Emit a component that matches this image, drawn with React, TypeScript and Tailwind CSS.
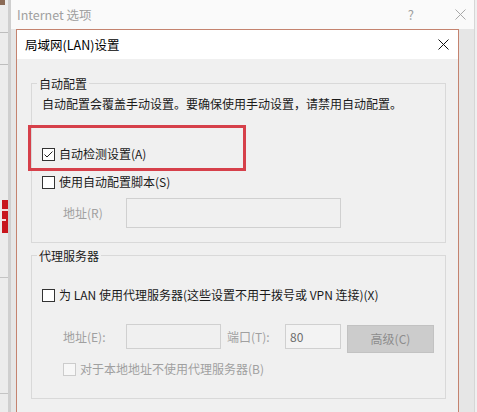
import React from "react";

const font = "font-['Noto_Sans_CJK_SC','Noto_Sans',sans-serif]";

function Box({ checked, disabled }: { checked?: boolean; disabled?: boolean }) {
  return (
    <span
      className={`flex h-[13px] w-[13px] shrink-0 items-center justify-center border ${
        disabled ? "border-[#cccccc] bg-[#f7f7f7]" : "border-[#333333] bg-white"
      }`}
    >
      {checked && (
        <svg width="11" height="11" viewBox="0 0 11 11">
          <path d="M1.5 5.5 L4 8 L9.5 2.5" fill="none" stroke="#222" strokeWidth="1" />
        </svg>
      )}
    </span>
  );
}

function CheckRow({
  label,
  checked,
  disabled,
  className = "",
}: {
  label: string;
  checked?: boolean;
  disabled?: boolean;
  className?: string;
}) {
  return (
    <div className={`flex h-[16px] items-center gap-[4px] ${className}`}>
      <Box checked={checked} disabled={disabled} />
      <span className={`text-[12px] leading-[16px] ${disabled ? "text-[#a0a0a0]" : "text-[#1a1a1a]"}`}>
        {label}
      </span>
    </div>
  );
}

function Group({ title, className = "", children }: { title: string; className?: string; children: React.ReactNode }) {
  return (
    <div className={`relative border border-[#d9d9d9] ${className}`}>
      <span className="absolute left-[5px] top-[-8px] bg-[#f0f0f0] px-[2px] text-[12px] leading-[16px] text-[#1a1a1a]">
        {title}
      </span>
      {children}
    </div>
  );
}

export default function App() {
  return (
    <div className={`relative h-[412px] w-[477px] overflow-hidden bg-[#f0f0f0] ${font}`}>
      {/* desktop strip on the left */}
      <div className="absolute left-0 top-0 h-[412px] w-[8px] bg-[#ececec]">
        <div className="h-[5px] w-[5px] bg-[#8a6a55]" />
        <div className="absolute left-0 top-[32px] h-px w-[8px] bg-[#bdbdbd]" />
        <div className="absolute left-0 top-[64px] h-px w-[8px] bg-[#bdbdbd]" />
        <div className="absolute left-[2px] top-[200px] h-[33px] w-[6px] bg-[#c8161d]">
          <div className="mt-[9px] h-[2px] w-[6px] bg-[#f4dcdc]" />
          <div className="mt-[8px] h-[2px] w-[4px] bg-[#f4dcdc]" />
        </div>
        <div className="absolute left-0 top-[277px] h-px w-[8px] bg-[#c4c4c4]" />
        <div className="absolute left-0 top-[393px] h-px w-[8px] bg-[#c4c4c4]" />
      </div>

      {/* outer window */}
      <div className="absolute left-[8px] top-0 h-[412px] w-[467px] border-l-[3px] border-r border-l-[#cfcfcf] border-r-[#d6d6d6] bg-[#e6e6e6]">
        <div className="flex h-[29px] items-center bg-[#fafafa] pl-[6px]">
          <span className="text-[12.5px] leading-[16px] text-[#a0a0a0]">Internet 选项</span>
          <span className="ml-auto mr-[41px] text-[13px] leading-[16px] text-[#a0a0a0]">?</span>
          <svg width="11" height="11" viewBox="0 0 11 11" className="mr-[8px]">
            <path d="M0.5 0.5 L10.5 10.5 M10.5 0.5 L0.5 10.5" stroke="#a8a8a8" strokeWidth="1" />
          </svg>
        </div>
      </div>

      {/* LAN dialog */}
      <div className="absolute left-[16px] top-[29px] w-[443px] border border-[#c4836f] bg-[#f0f0f0]">
        <div className="flex h-[29px] items-center justify-between bg-white pl-[8px] pr-[9px]">
          <span className="text-[12.5px] leading-[16px] text-black">局域网(LAN)设置</span>
          <svg width="11" height="11" viewBox="0 0 11 11">
            <path d="M0.5 0.5 L10.5 10.5 M10.5 0.5 L0.5 10.5" stroke="#111" strokeWidth="1" />
          </svg>
        </div>

        <div className="ml-[14px] mr-[12px] pb-[40px] pt-[24px]">
          <Group title="自动配置" className="pb-[14px] pl-[10px] pt-[12px]">
            <div className="text-[12px] leading-[16px] text-[#1a1a1a]">
              自动配置会覆盖手动设置。要确保使用手动设置，请禁用自动配置。
            </div>
            <CheckRow className="mt-[34px]" label="自动检测设置(A)" checked />
            <CheckRow className="mt-[12px]" label="使用自动配置脚本(S)" />
            <div className="mt-[8px] flex items-center pl-[21px]">
              <span className="w-[63px] text-[12px] leading-[16px] text-[#a0a0a0]">地址(R)</span>
              <div className="h-[30px] w-[215px] border border-[#d0d0d0] bg-[#f0f0f0]" />
            </div>
          </Group>

          <Group title="代理服务器" className="mt-[12px] pb-[21px] pl-[10px] pt-[31px]">
            <CheckRow label="为 LAN 使用代理服务器(这些设置不用于拨号或 VPN 连接)(X)" />
            <div className="mt-[21px] flex items-start pl-[21px]">
              <span className="flex h-[25px] w-[63px] items-center text-[12px] leading-[16px] text-[#a0a0a0]">
                地址(E):
              </span>
              <div className="h-[25px] w-[95px] border border-[#d0d0d0] bg-[#f0f0f0]" />
              <span className="ml-[6px] flex h-[25px] w-[58px] items-center text-[12px] leading-[16px] text-[#a0a0a0]">
                端口(T):
              </span>
              <div className="flex h-[25px] w-[56px] items-center border border-[#d0d0d0] bg-[#f3f3f3] pl-[4px] text-[12px] leading-[16px] text-[#6d6d6d]">
                80
              </div>
              <div className="ml-[6px] mt-[1px] flex h-[28px] w-[87px] items-center justify-center border border-[#c2c2c2] bg-[#cccccc] text-[12px] leading-[16px] text-[#8c8c8c]">
                高级(C)
              </div>
            </div>
            <CheckRow className="ml-[21px] mt-[8px]" label="对于本地地址不使用代理服务器(B)" disabled />
          </Group>
        </div>
      </div>

      {/* red highlight annotation */}
      <div className="absolute left-[28px] top-[125px] h-[46px] w-[218px] border-[3px] border-[#d6404a]" />
    </div>
  );
}
